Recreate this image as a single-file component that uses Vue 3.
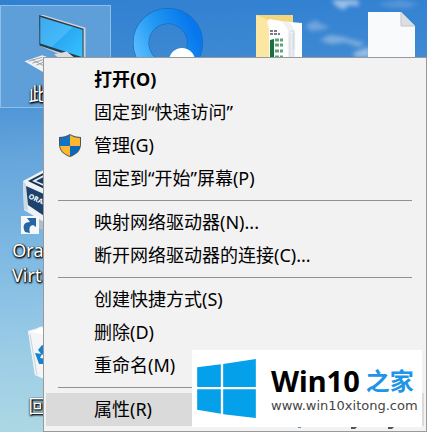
<script setup>
const groups = [
  [
    { label: '打开(O)', strong: true },
    { label: '固定到“快速访问”' },
    { label: '管理(G)', shield: true },
    { label: '固定到“开始”屏幕(P)' },
  ],
  [{ label: '映射网络驱动器(N)...' }, { label: '断开网络驱动器的连接(C)...' }],
  [{ label: '创建快捷方式(S)' }, { label: '删除(D)' }, { label: '重命名(M)' }],
  [{ label: '属性(R)', active: true }],
]
</script>

<template>
  <main class="desktop">
    <svg class="clouds" viewBox="0 0 150 58" aria-hidden="true">
      <defs>
        <filter id="soft" x="-50%" y="-50%" width="200%" height="200%">
          <feGaussianBlur stdDeviation="2" />
        </filter>
      </defs>
      <g filter="url(#soft)" fill="#c3d5ee">
        <path d="M55 0 L81 0 L82 6 L72 5 L66 10 L58 5Z" opacity=".75" />
        <path d="M28 26 L38 20 L44 24 L53 27 L44 30 L34 31Z" opacity=".4" />
        <path d="M43 40 L53 35 L66 37 L76 40 L88 43 L82 47 L68 42 L54 44Z" opacity=".5" />
        <path d="M76 53 L92 47 L94 57 L78 57Z" opacity=".7" />
        <path d="M100 4 L124 0 L142 4 L130 8 L112 7Z" opacity=".25" />
      </g>
    </svg>

    <div class="shortcut computer">
      <svg class="pc" viewBox="0 0 64 62" aria-hidden="true">
        <defs>
          <linearGradient id="screen" x1="0" y1="0" x2="1" y2="1">
            <stop offset="0" stop-color="#3fa9ee" />
            <stop offset=".5" stop-color="#43b9f8" />
            <stop offset=".52" stop-color="#2ba9f4" />
            <stop offset="1" stop-color="#35c3ff" />
          </linearGradient>
        </defs>
        <path d="M16 -1 L62 13 L62 48 L59 50 L15 31Z" fill="#cfd3d6" />
        <path d="M15 0 L60 14 L60 46 L15 31Z" fill="#263c4b" />
        <path d="M16 2 L59 15 L59 43 L16 29Z" fill="url(#screen)" />
        <path d="M30 40 L43 37 L50 43 L40 48Z" fill="#d9dde2" />
        <path d="M0 47 L18 41 L44 50 L24 61Z" fill="#f2f2f2" />
        <path d="M4 47 L18 43 M8 49 L20 45 M12 51 L24 46 M7 45 L24 54" stroke="#9aa1a8" stroke-width="1" />
      </svg>
      <span class="caption">此电脑</span>
    </div>

    <svg class="browser" viewBox="0 0 72 72" aria-hidden="true">
      <defs>
        <linearGradient id="ring" x1="0" y1=".8" x2="1" y2=".3">
          <stop offset="0" stop-color="#55baff" />
          <stop offset=".45" stop-color="#2299f2" />
          <stop offset="1" stop-color="#0877ed" />
        </linearGradient>
      </defs>
      <circle cx="35" cy="35" r="27" fill="none" stroke="#1264b4" stroke-width="16" />
      <circle cx="35" cy="35" r="27" fill="none" stroke="url(#ring)" stroke-width="15" />
      <circle cx="49" cy="53" r="13" fill="#fff" />
    </svg>

    <svg class="folder" viewBox="0 0 46 60" aria-hidden="true">
      <path d="M0 0 H37 V60 H0Z" fill="#f3d67d" />
      <path d="M11 5 L46 8 V60 H13Z" fill="#fbfcfd" />
      <path d="M13 4 L25 6 L31 14 V60 H13Z" fill="#fff" />
      <path d="M27 7 L34 8 L39 16 V60 H32 V15Z" fill="#eef0f4" />
      <path d="M34 16 H38 V34 M34 18 V60 M37 18 V60" fill="none" stroke="#cfd5df" />
      <path d="M14 25 L18 24 V60 H14Z" fill="#16713f" />
      <path d="M14 16 H22 M14 19 H24" stroke="#777d80" stroke-width="2" stroke-dasharray="3 1" />
      <path d="M19 25 H27 M19 30 H27 M19 36 H27 M19 42 H27" stroke="#5fa27c" stroke-width="3" stroke-dasharray="4 1" />
      <path d="M0 0 L10 4 L13 14 V60 H0Z" fill="#fbe7a2" />
    </svg>

    <svg class="document" viewBox="0 0 48 60" aria-hidden="true">
      <path d="M0 0 H33 L47 14 V60 H0Z" fill="#f8fafb" />
      <path d="M33 0 L47 14 H33Z" fill="#dcdfe1" />
      <path d="M33 0 V14 H47" fill="none" stroke="#bfc5c9" />
    </svg>

    <div class="shortcut virtualbox">
      <svg class="box" viewBox="0 0 72 70" aria-hidden="true">
        <path d="M18 50 L34 58 L52 50 V60 L34 68 L18 62Z" fill="#aebfcc" />
        <path d="M3 15 L33 -1 L63 15 L62 45 L34 62 L4 44Z" fill="#eef2f6" />
        <path d="M3 15 L6 18 L8 45 L4 43Z" fill="#cdd9e3" />
        <path d="M8 15 L33 2 L58 15 L33 27Z" fill="#15304f" />
        <path d="M12 15 L33 4 L54 15 L33 24Z" fill="#e4ecf3" />
        <path d="M16 15 L33 6 L50 15 L33 22Z" fill="#1b3d62" />
        <path d="M6 20 L33 32 V56 L8 39Z" fill="#1d436c" />
        <text class="brand" x="8" y="32" transform="rotate(25 8 32)">ORACLE</text>
        <rect x="1" y="50" width="18" height="18" fill="#f4f8fb" />
        <path d="M5 66 C2 60 4 56 10 56 L7 52 H16 V61 L13 59 C9 60 9 63 10 67Z" fill="#2765a5" />
      </svg>
      <span class="caption">Oracle VM VirtualBox</span>
    </div>

    <div class="shortcut recycle">
      <svg class="bin" viewBox="0 0 56 56" aria-hidden="true">
        <path d="M0 5 L15 0 L51 5 L43 51 L24 55 L7 49Z" fill="#e4e9ec" />
        <path d="M0 5 L15 9 L51 5 L43 51 L16 53 L7 49Z" fill="#f4f6f7" opacity=".9" />
        <path d="M0 5 L8 4 L12 1 L22 5 L15 9Z" fill="#fff" />
        <path d="M2 8 L9 49" stroke="#c8d3da" />
        <path d="M10 24 L14 19 L20 21 L17 26 L14 29Z M7 27 L14 28 L12 32 L19 33 V38 L11 38Z" fill="#1683cf" />
      </svg>
      <span class="caption">回收站</span>
    </div>

    <nav class="menu" role="menu">
      <ul v-for="(group, g) in groups" :key="g" class="group" role="group">
        <li v-for="item in group" :key="item.label" role="none">
          <button
            type="button"
            role="menuitem"
            class="item"
            :class="{ strong: item.strong, active: item.active }"
          >
            <span class="icon">
              <svg v-if="item.shield" class="shield" viewBox="0 0 22 23" aria-hidden="true">
                <path d="M11 0 C8 2 4 3 0 3 V10 C0 17 5 21 11 23 C17 21 22 17 22 10 V3 C18 3 14 2 11 0Z" fill="#4b5663" />
                <path d="M11 1 C8 3 5 4 1 4 V12 H11Z" fill="#1172c6" />
                <path d="M11 1 C14 3 17 4 21 4 V12 H11Z" fill="#fbb82e" />
                <path d="M1 12 H11 V22 C5 20 2 17 1 12Z" fill="#fbb82e" />
                <path d="M21 12 H11 V22 C17 20 20 17 21 12Z" fill="#0b67bd" />
              </svg>
            </span>
            <span>{{ item.label }}</span>
          </button>
        </li>
      </ul>
    </nav>

    <aside class="badge">
      <svg class="windows" viewBox="22 63 176 177" aria-hidden="true">
        <path d="M22 88 L93 79 V147 H22Z M100 78 L198 63 V147 H100Z M22 154 H93 V227 L22 215Z M100 154 H198 V240 L100 229Z" fill="#04a1ea" />
      </svg>
      <div class="words">
        <strong class="name">Win10<span class="home">之家</span></strong>
        <span class="site">www.win10xitong.com</span>
      </div>
      <svg class="specks" viewBox="0 0 100 2" aria-hidden="true">
        <path d="M1 0 H4 V1 H1Z" fill="#4a9bd8" />
        <path d="M54 0 H60 L58 2 H54Z M91 0 H97 L95 2 H91Z" fill="#555" />
      </svg>
    </aside>
  </main>
</template>

<style>
body {
  margin: 0;
}
</style>

<style scoped>
.desktop {
  position: relative;
  box-sizing: border-box;
  min-height: 100vh;
  padding: 57px 0 0 43px;
  overflow: hidden;
  background: linear-gradient(178deg, #3080d2 0, #3d88d2 14%, #66a6dc 36%, #80bae3 58%, #9ccde6 80%, #b0d9e3 100%);
  font-family: "Noto Sans", "Noto Sans CJK SC", sans-serif;
  font-size: 18px;
}

.clouds {
  position: absolute;
  top: 0;
  left: 277px;
  width: 150px;
}

.shortcut {
  position: absolute;
  box-sizing: border-box;
  display: flex;
  flex-direction: column;
  align-items: center;
  width: 111px;
}

.computer {
  top: 5px;
  left: 0;
  height: 103px;
  padding-top: 9px;
  border: 1px solid #91bee8;
  background: #5e9fda;
}

.pc {
  width: 64px;
  height: 62px;
  margin-bottom: 6px;
}

.virtualbox {
  top: 166px;
  left: 0;
}

.box {
  width: 72px;
  height: 70px;
  margin-bottom: 2px;
}

.brand {
  fill: #fff;
  font-size: 7px;
  font-weight: 700;
}

.recycle {
  top: 326px;
  left: 0;
}

.bin {
  width: 56px;
  height: 56px;
  margin-bottom: 12px;
}

.caption {
  color: #fff;
  line-height: 25px;
  text-align: center;
  text-shadow: 1px 1px 2px #000, 0 1px 2px #000, 1px 0 1px #222;
}

.browser {
  position: absolute;
  top: 8px;
  left: 133px;
  width: 72px;
}

.folder {
  position: absolute;
  top: 15px;
  left: 256px;
  width: 46px;
}

.document {
  position: absolute;
  top: 12px;
  left: 368px;
  width: 48px;
}

.menu {
  position: relative;
  padding: 5px 2px;
  border: 1px solid #999;
  background: #f2f2f2;
}

.group {
  margin: 0;
  padding: 0;
  list-style: none;
}

.group + .group::before {
  content: "";
  display: block;
  height: 1px;
  margin: 5px 12px;
  background: #919191;
}

.item {
  display: flex;
  align-items: center;
  width: 100%;
  height: 33px;
  padding: 0;
  border: 0;
  background: transparent;
  color: #000;
  font: inherit;
  line-height: 33px;
  text-align: left;
  white-space: nowrap;
}

.item.active {
  background: #dadada;
}

.item.strong {
  font-weight: 700;
}

.icon {
  display: flex;
  justify-content: center;
  width: 48px;
}

.shield {
  width: 22px;
  height: 23px;
}

.badge {
  position: absolute;
  right: 5px;
  bottom: 5px;
  box-sizing: border-box;
  display: flex;
  align-items: center;
  gap: 15px;
  width: 230px;
  height: 77px;
  padding: 0 5px;
  background: #fff;
}

.windows {
  flex: none;
  width: 59px;
  height: 59px;
}

.words {
  display: flex;
  flex-direction: column;
  padding-top: 4px;
  white-space: nowrap;
}

.name {
  display: flex;
  align-items: center;
  gap: 6px;
  color: #000;
  font-size: 29px;
  line-height: 30px;
}

.home {
  color: #2094e6;
  font-size: 24px;
}

.site {
  color: #444;
  font-family: "DejaVu Sans", sans-serif;
  font-size: 13px;
  line-height: 20px;
}

.specks {
  position: absolute;
  top: 100%;
  right: 25px;
  width: 100px;
  height: 2px;
}
</style>
